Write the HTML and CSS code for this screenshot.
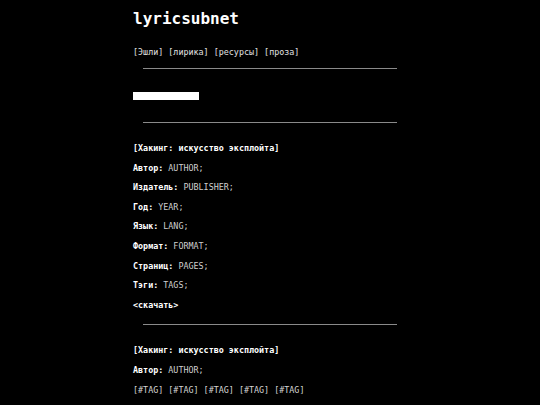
FILE: index.html
```html
<!DOCTYPE html>
<html lang="ru">
<head>
<meta charset="utf-8">
<title>lyricsubnet</title>
<link rel="stylesheet" href="styles.css">
</head>
<body>
<div class="wrap">
  <h1 class="logo">lyricsubnet</h1>
  <nav class="nav">[Эшли] [лирика] [ресурсы] [проза]</nav>
  <hr class="rule">
  <div class="bar"></div>
  <hr class="rule rule-gap">
  <section class="entry">
    <p class="row title">[Хакинг: искусство эксплойта]</p>
    <p class="row"><b>Автор:</b> AUTHOR;</p>
    <p class="row"><b>Издатель:</b> PUBLISHER;</p>
    <p class="row"><b>Год:</b> YEAR;</p>
    <p class="row"><b>Язык:</b> LANG;</p>
    <p class="row"><b>Формат:</b> FORMAT;</p>
    <p class="row"><b>Страниц:</b> PAGES;</p>
    <p class="row"><b>Тэги:</b> TAGS;</p>
    <p class="row"><b>&lt;скачать&gt;</b></p>
  </section>
  <hr class="rule rule-after">
  <section class="entry">
    <p class="row title">[Хакинг: искусство эксплойта]</p>
    <p class="row"><b>Автор:</b> AUTHOR;</p>
    <p class="row tags">[#TAG] [#TAG] [#TAG] [#TAG] [#TAG]</p>
  </section>
</div>
</body>
</html>
```
FILE: styles.css
```css
html, body {
  margin: 0;
  padding: 0;
  background: #000;
}
body {
  font-family: "DejaVu Sans Mono", "Liberation Mono", monospace;
  color: #d4d4d4;
}
.wrap {
  width: 274px;
  margin: 0 auto;
}
.logo {
  margin: 9px 0 0;
  font-size: 16px;
  line-height: 20px;
  font-weight: bold;
  color: #fff;
}
.nav {
  margin-top: 13px;
  font-size: 8.4px;
  line-height: 20px;
  color: #e0e0e0;
}
.rule {
  margin: 6px 10px 0;
  border: 0;
  border-top: 1px solid #8a8a8a;
  height: 0;
}
.bar {
  margin-top: 23px;
  width: 66px;
  height: 8px;
  background: #fff;
}
.rule-gap {
  margin-top: 22px;
}
.rule-after {
  margin-top: 9px;
}
.entry {
  margin-top: 16px;
}
.row {
  margin: 0;
  font-size: 8.4px;
  line-height: 19.6px;
  color: #cfcfcf;
  white-space: nowrap;
}
.row b {
  color: #fff;
  font-weight: bold;
}
.title {
  color: #fff;
  font-weight: bold;
}
.tags {
  color: #d4d4d4;
}
```
